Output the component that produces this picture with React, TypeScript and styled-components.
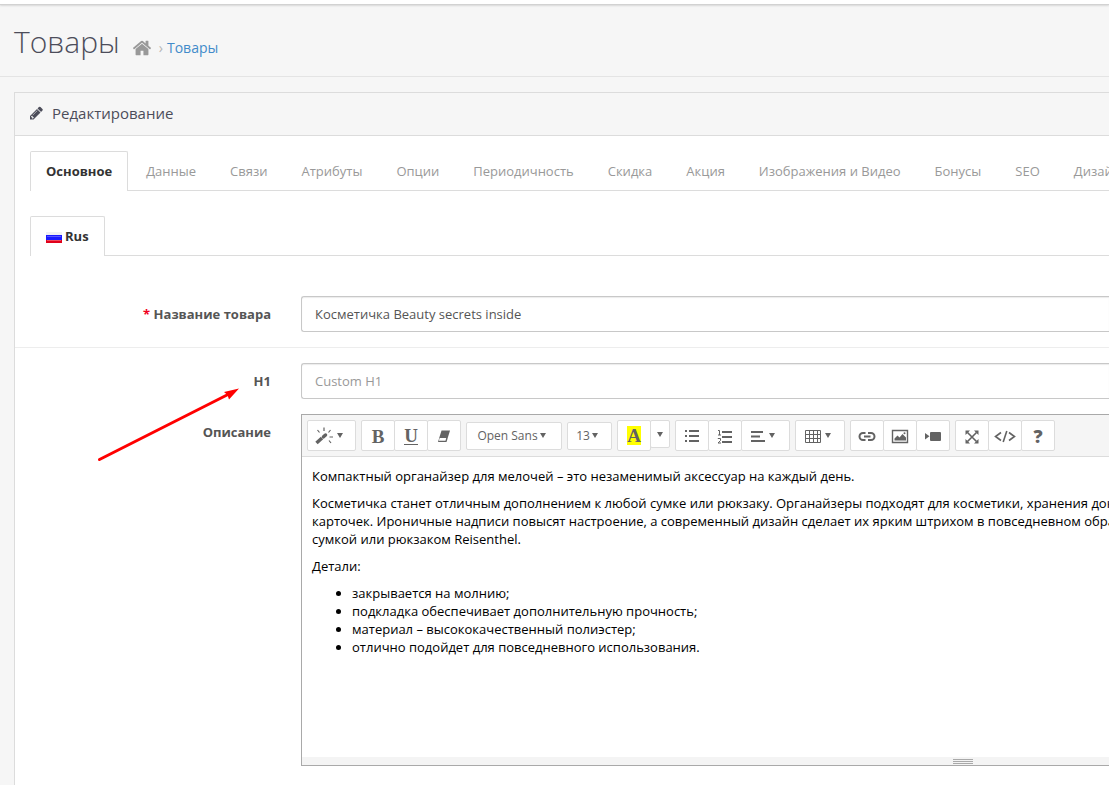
import React from "react";
import styled, { createGlobalStyle, css } from "styled-components";

const GlobalStyle = createGlobalStyle`
  *, *::before, *::after { box-sizing: border-box; }
  body {
    margin: 0;
    background: #f6f6f6;
    color: #555;
    font: 13px/18px "Open Sans", "Noto Sans", sans-serif;
  }
  button, input { font: inherit; color: inherit; }
`;

const Page = styled.div`
  display: flex;
  flex-direction: column;
  min-height: 100vh;
  overflow: hidden;
`;

const TopBar = styled.div`
  flex: none;
  height: 5px;
  background: #fff;
  border-bottom: 1px solid #d2d2d2;
  box-shadow: 0 1px 2px rgba(0, 0, 0, 0.12);
`;

const PageHeader = styled.header`
  display: flex;
  align-items: baseline;
  gap: 12px;
  height: 72px;
  padding: 17px 14px 0;
  border-bottom: 1px solid #e4e4e4;
`;

const Title = styled.h1`
  margin: 0;
  font-size: 30px;
  font-weight: 300;
  line-height: 40px;
  color: #4c4d5a;
`;

const Breadcrumb = styled.nav`
  display: flex;
  align-items: baseline;
  font-size: 14px;
  line-height: 20px;
  color: #999;

  a {
    color: #428bca;
    text-decoration: none;
  }
  svg {
    display: block;
  }
`;

const HomeLink = styled.a`
  align-self: center;
  height: 20px;
`;

const Chevron = styled.span`
  padding: 0 4px 0 7px;
  color: #b5b5b5;
`;

const Panel = styled.main`
  flex: 1;
  margin: 15px 0 0 14px;
  background: #fff;
  border: 1px solid #dcdcdc;
  border-width: 1px 0 0 1px;
`;

const PanelHeading = styled.h2`
  display: flex;
  align-items: center;
  gap: 8px;
  height: 43px;
  margin: 0;
  padding: 0 15px 2px;
  background: #f6f6f6;
  border-bottom: 1px solid #dcdcdc;
  color: #4c4d5a;
  font-size: 15px;
  font-weight: 400;
`;

const PanelBody = styled.div`
  padding: 15px 0 0;
`;

const Tabs = styled.nav`
  display: flex;
  gap: 2px;
  height: 40px;
  margin: 0 0 25px 15px;
  border-bottom: 1px solid #dcdcdc;
`;

const Tab = styled.a<{ $active?: boolean }>`
  flex: none;
  display: flex;
  align-items: center;
  gap: 3px;
  height: 40px;
  padding: 0 15px 2px;
  border: 1px solid transparent;
  border-bottom: 0;
  border-radius: 2px 2px 0 0;
  color: #999;
  text-decoration: none;
  white-space: nowrap;
  ${(p) =>
    p.$active &&
    css`
      background: #fff;
      border-color: #dcdcdc;
      color: #333;
      font-weight: 700;
    `}
`;

const Form = styled.form`
  position: relative;
  padding-top: 15px;
`;

const FormGroup = styled.div<{ $ruled?: boolean }>`
  display: grid;
  grid-template-columns: 256px minmax(0, 1fr);
  column-gap: 30px;
  padding-bottom: 15px;
  ${(p) =>
    p.$ruled &&
    css`
      margin-bottom: 15px;
      border-bottom: 1px solid #ededed;
    `}
`;

const Label = styled.label`
  padding-top: 9px;
  color: #555;
  font-weight: 700;
  text-align: right;
`;

const Required = styled.span`
  color: #f00020;
`;

const TextInput = styled.input`
  width: 100%;
  height: 36px;
  padding: 0 13px;
  background: #fff;
  border: 1px solid #c8c8c8;
  border-right: 0;
  border-radius: 3px 0 0 3px;
  box-shadow: inset 0 1px 1px rgba(0, 0, 0, 0.08);

  &::placeholder {
    color: #999;
    opacity: 1;
  }
`;

const Editor = styled.div`
  border: 1px solid #a9a9a9;
  border-right: 0;
`;

const Toolbar = styled.div`
  display: flex;
  gap: 5px;
  height: 42px;
  padding: 5px;
  background: #f5f5f5;
  border-bottom: 1px solid #dcdcdc;
`;

const ButtonGroup = styled.div<{ $centered?: boolean }>`
  display: flex;
  align-items: flex-start;
  align-self: ${(p) => (p.$centered ? "center" : "flex-start")};
`;

const ToolButton = styled.button<{ $width?: number; $small?: boolean; $menu?: boolean }>`
  display: flex;
  align-items: center;
  justify-content: center;
  gap: ${(p) => (p.$small ? 2 : 4)}px;
  width: ${(p) => p.$width ?? 34}px;
  height: ${(p) => (p.$small ? 28 : 31)}px;
  padding: 0 ${(p) => (p.$menu ? 5 : 0)}px 0 0;
  background: #fff;
  border: 1px solid #dcdcdc;
  border-radius: 2px;
  color: #636363;
  font-size: ${(p) => (p.$small ? 12 : 13)}px;
  white-space: nowrap;

  & + & {
    margin-left: -1px;
  }
`;

const SerifGlyph = styled.span<{ $underline?: boolean; $marked?: boolean }>`
  margin-top: ${(p) => (p.$marked ? 0 : 2)}px;
  background: ${(p) => (p.$marked ? "#ff0" : "none")};
  border-bottom: ${(p) => (p.$underline ? "1px solid #636363" : "0")};
  font: 700 19px/${(p) => (p.$underline ? 16 : 19)}px "Liberation Serif", serif;
`;

const HelpGlyph = styled.span`
  font-size: 18px;
  font-weight: 800;
`;

const EditArea = styled.div`
  min-height: 300px;
  padding: 10px;
  overflow: hidden;
  background: #fff;
  color: #000;
  white-space: nowrap;

  p {
    margin: 0 0 9px;
  }
  ul {
    margin: 0;
    padding-left: 40px;
  }
`;

const StatusBar = styled.div`
  display: flex;
  flex-direction: column;
  gap: 1px;
  height: 8px;
  padding: 2px 0 0 80.7%;
  background: #f4f4f4;
  cursor: ns-resize;
`;

const GripLine = styled.span`
  width: 20px;
  height: 1px;
  background: #a9a9a9;
`;

const Pointer = styled.svg`
  position: absolute;
  top: 100px;
  left: 80px;
  pointer-events: none;
`;

const Caret = () => (
  <svg width="6" height="5" viewBox="0 0 6 5" aria-hidden="true">
    <path d="M0 0h6L3 5z" fill="currentColor" />
  </svg>
);

const HomeIcon = () => (
  <svg width="20" height="20" viewBox="0 0 1792 1792" fill="#999" aria-hidden="true">
    <path d="M1472 992v480q0 26-19 45t-45 19h-384v-384h-256v384h-384q-26 0-45-19t-19-45v-480q0-1 .5-3t.5-3l575-474 575 474q1 2 1 6zm223-69l-62 74q-8 9-21 11h-3q-13 0-21-7l-692-577-692 577q-12 8-24 7-13-2-21-11l-62-74q-8-10-7-23.5t11-21.5l719-599q32-26 76-26t76 26l244 204v-195q0-14 9-23t23-9h192q14 0 23 9t9 23v408l219 182q10 8 11 21.5t-7 23.5z" />
  </svg>
);

const PencilIcon = () => (
  <svg width="14" height="14" viewBox="128 64 1664 1664" fill="currentColor" aria-hidden="true">
    <path d="M491 1536l91-91-235-235-91 91v107h128v128h107zm523-928q0-22-22-22-10 0-17 7l-542 542q-7 7-7 17 0 22 22 22 10 0 17-7l542-542q7-7 7-17zm-54-192l416 416-832 832h-416v-416zm683 96q0 53-37 90l-166 166-416-416 166-165q36-38 90-38 53 0 91 38l235 234q37 39 37 91z" />
  </svg>
);

const FlagIcon = () => (
  <svg width="16" height="15" viewBox="0 -4 16 15" aria-hidden="true">
    <path d="M0 0h16v4H0z" fill="#f0f0f3" />
    <path d="M0 3h16v5H0z" fill="#1a1aff" />
    <path d="M1 4h14v1H1z" fill="#5757ff" />
    <path d="M0 8h16v3H0z" fill="#e0001b" />
    <path d="M1 8h14v1H1z" fill="#f04a5c" />
  </svg>
);

const Icon = ({ w = 18, children }: { w?: number; children: React.ReactNode }) => (
  <svg
    width={w}
    height="18"
    viewBox={`0 0 ${w} 18`}
    fill="none"
    stroke="currentColor"
    strokeWidth="2"
    aria-hidden="true"
  >
    {children}
  </svg>
);

const WandIcon = () => (
  <Icon>
    <path d="M1.500 16L7 11" strokeWidth="3.500" />
    <path d="M8.500 9.800L10.500 8" strokeWidth="3.500" strokeLinecap="round" />
    <path d="M9 .500v3.500M2.500 3l2 2.500M15.500 3l-2 2.500M14.500 10h3.500M14 13.500l2 2.500" strokeWidth="1.200" />
  </Icon>
);

const EraserIcon = () => (
  <Icon w={14}>
    <path d="M4.500 3.500h8.500L9.500 15H1z" fill="currentColor" stroke="none" />
    <path d="M2.700 11h6.500L8.500 13.700H1.900z" fill="#fff" stroke="none" />
  </Icon>
);

const BulletsIcon = () => (
  <Icon w={16}>
    <path d="M1 4h2M1 9h2M1 14h2" />
    <path d="M5 4h10M5 9h10M5 14h10" />
  </Icon>
);

const NumbersIcon = () => (
  <Icon w={16}>
    <path d="M5 5h10M5 10h10M5 15h10" />
    <path d="M1 3.500h1.500V8M1 8h3M.800 11.500h2.700v2L1 16h3" strokeWidth="1" />
  </Icon>
);

const AlignIcon = () => (
  <Icon w={14}>
    <path d="M0 5h12M0 9.500h9M0 14h14" />
  </Icon>
);

const TableIcon = () => (
  <Icon w={16}>
    <path d="M.500 3.500h15v12H.500zM.500 7.500h15M.500 11.500h15M4.500 3.500v12M8.500 3.500v12M12.500 3.500v12" strokeWidth="1" />
  </Icon>
);

const LinkIcon = () => (
  <Icon>
    <path d="M7.500 6H5a3.500 3.500 0 0 0 0 7h2.500M10 6h3a3.500 3.500 0 0 1 0 7h-3M6 9.500h6.500" />
  </Icon>
);

const PictureIcon = () => (
  <Icon>
    <path d="M1.500 3.500h15v12h-15z" strokeWidth="1.400" />
    <path d="M3.500 13.500v-2l3-3 2 2 3-3.500 3.500 3.500v3z" fill="currentColor" stroke="none" />
    <circle cx="13.500" cy="6.200" r="1" fill="currentColor" stroke="none" />
  </Icon>
);

const VideoIcon = () => (
  <Icon>
    <path d="M1 6l4.500 3.200L1 12.500z" fill="currentColor" stroke="none" />
    <rect x="6" y="5" width="11" height="9" rx="1" fill="currentColor" stroke="none" />
  </Icon>
);

const FullscreenIcon = () => (
  <Icon w={14}>
    <path d="M2.500 5.500l9 9M11.500 5.500l-9 9" strokeWidth="1.600" />
    <path d="M.500 3.500h4.500l-4.500 4.500zM13.500 3.500v4.500L9 3.500zM.500 16.500v-4.500L5 16.500zM13.500 16.500H9l4.500-4.500z" fill="currentColor" stroke="none" />
  </Icon>
);

const CodeIcon = () => (
  <Icon w={22}>
    <path d="M7 5.500L1.500 9.500 7 13.500M15 5.500l5.500 4-5.500 4M12.800 4L9.200 15" strokeWidth="1.600" />
  </Icon>
);

const sections = [
  "Основное",
  "Данные",
  "Связи",
  "Атрибуты",
  "Опции",
  "Периодичность",
  "Скидка",
  "Акция",
  "Изображения и Видео",
  "Бонусы",
  "SEO",
  "Дизайн",
];

export default function App() {
  return (
    <>
      <GlobalStyle />
      <Page>
        <TopBar />
        <PageHeader>
          <Title>Товары</Title>
          <Breadcrumb>
            <HomeLink href="#home" aria-label="Главная">
              <HomeIcon />
            </HomeLink>
            <Chevron>›</Chevron>
            <a href="#products">Товары</a>
          </Breadcrumb>
        </PageHeader>
        <Panel>
          <PanelHeading>
            <PencilIcon />
            Редактирование
          </PanelHeading>
          <PanelBody>
            <Tabs>
              {sections.map((name, i) => (
                <Tab key={name} href={`#section-${i}`} $active={i === 0}>
                  {name}
                </Tab>
              ))}
            </Tabs>
            <Tabs>
              <Tab href="#rus" $active>
                <FlagIcon />
                Rus
              </Tab>
            </Tabs>
            <Form>
              <FormGroup $ruled>
                <Label htmlFor="name">
                  <Required>*</Required> Название товара
                </Label>
                <TextInput id="name" defaultValue="Косметичка Beauty secrets inside" />
              </FormGroup>
              <FormGroup>
                <Label htmlFor="h1">H1</Label>
                <TextInput id="h1" placeholder="Custom H1" />
              </FormGroup>
              <FormGroup>
                <Label as="span" id="description">
                  Описание
                </Label>
                <Editor>
                  <Toolbar>
                    <ButtonGroup>
                      <ToolButton type="button" $width={49} $menu aria-label="Стиль">
                        <WandIcon />
                        <Caret />
                      </ToolButton>
                    </ButtonGroup>
                    <ButtonGroup>
                      <ToolButton type="button">
                        <SerifGlyph>B</SerifGlyph>
                      </ToolButton>
                      <ToolButton type="button">
                        <SerifGlyph $underline>U</SerifGlyph>
                      </ToolButton>
                      <ToolButton type="button" aria-label="Очистить">
                        <EraserIcon />
                      </ToolButton>
                    </ButtonGroup>
                    <ButtonGroup $centered>
                      <ToolButton type="button" $width={96} $small $menu>
                        Open Sans
                        <Caret />
                      </ToolButton>
                    </ButtonGroup>
                    <ButtonGroup $centered>
                      <ToolButton type="button" $width={45} $small $menu>
                        <span>13</span>
                        <Caret />
                      </ToolButton>
                    </ButtonGroup>
                    <ButtonGroup>
                      <ToolButton type="button">
                        <SerifGlyph $marked>A</SerifGlyph>
                      </ToolButton>
                      <ToolButton type="button" $width={20} $small aria-label="Цвет">
                        <Caret />
                      </ToolButton>
                    </ButtonGroup>
                    <ButtonGroup>
                      <ToolButton type="button" aria-label="Список">
                        <BulletsIcon />
                      </ToolButton>
                      <ToolButton type="button" aria-label="Нумерация">
                        <NumbersIcon />
                      </ToolButton>
                      <ToolButton type="button" $width={49} $menu aria-label="Абзац">
                        <AlignIcon />
                        <Caret />
                      </ToolButton>
                    </ButtonGroup>
                    <ButtonGroup>
                      <ToolButton type="button" $width={50} $menu aria-label="Таблица">
                        <TableIcon />
                        <Caret />
                      </ToolButton>
                    </ButtonGroup>
                    <ButtonGroup>
                      <ToolButton type="button" aria-label="Ссылка">
                        <LinkIcon />
                      </ToolButton>
                      <ToolButton type="button" aria-label="Картинка">
                        <PictureIcon />
                      </ToolButton>
                      <ToolButton type="button" aria-label="Видео">
                        <VideoIcon />
                      </ToolButton>
                    </ButtonGroup>
                    <ButtonGroup>
                      <ToolButton type="button" aria-label="На весь экран">
                        <FullscreenIcon />
                      </ToolButton>
                      <ToolButton type="button" aria-label="Код">
                        <CodeIcon />
                      </ToolButton>
                      <ToolButton type="button">
                        <HelpGlyph>?</HelpGlyph>
                      </ToolButton>
                    </ButtonGroup>
                  </Toolbar>
                  <EditArea
                    contentEditable
                    suppressContentEditableWarning
                    spellCheck={false}
                    role="textbox"
                    aria-multiline="true"
                    aria-labelledby="description"
                  >
                    <p>Компактный органайзер для мелочей – это незаменимый аксессуар на каждый день.</p>
                    <p>
                      Косметичка станет отличным дополнением к любой сумке или рюкзаку. Органайзеры подходят для
                      косметики, хранения документов
                      <br />
                      карточек. Ироничные надписи повысят настроение, а современный дизайн сделает их ярким штрихом в
                      повседневном образе
                      <br />
                      сумкой или рюкзаком Reisenthel.
                    </p>
                    <p>Детали:</p>
                    <ul>
                      <li>закрывается на молнию;</li>
                      <li>подкладка обеспечивает дополнительную прочность;</li>
                      <li>материал – высококачественный полиэстер;</li>
                      <li>отлично подойдет для повседневного использования.</li>
                    </ul>
                  </EditArea>
                  <StatusBar>
                    <GripLine />
                    <GripLine />
                    <GripLine />
                  </StatusBar>
                </Editor>
              </FormGroup>
              <Pointer width="150" height="85" viewBox="0 0 150 85" aria-hidden="true">
                <path d="M4.500 78.500L132 14" stroke="#f00" strokeWidth="3" strokeLinecap="round" />
                <path d="M144 7.500l-15 3.500 3.500 3 1.500 4.500z" fill="#f00" />
              </Pointer>
            </Form>
          </PanelBody>
        </Panel>
      </Page>
    </>
  );
}
